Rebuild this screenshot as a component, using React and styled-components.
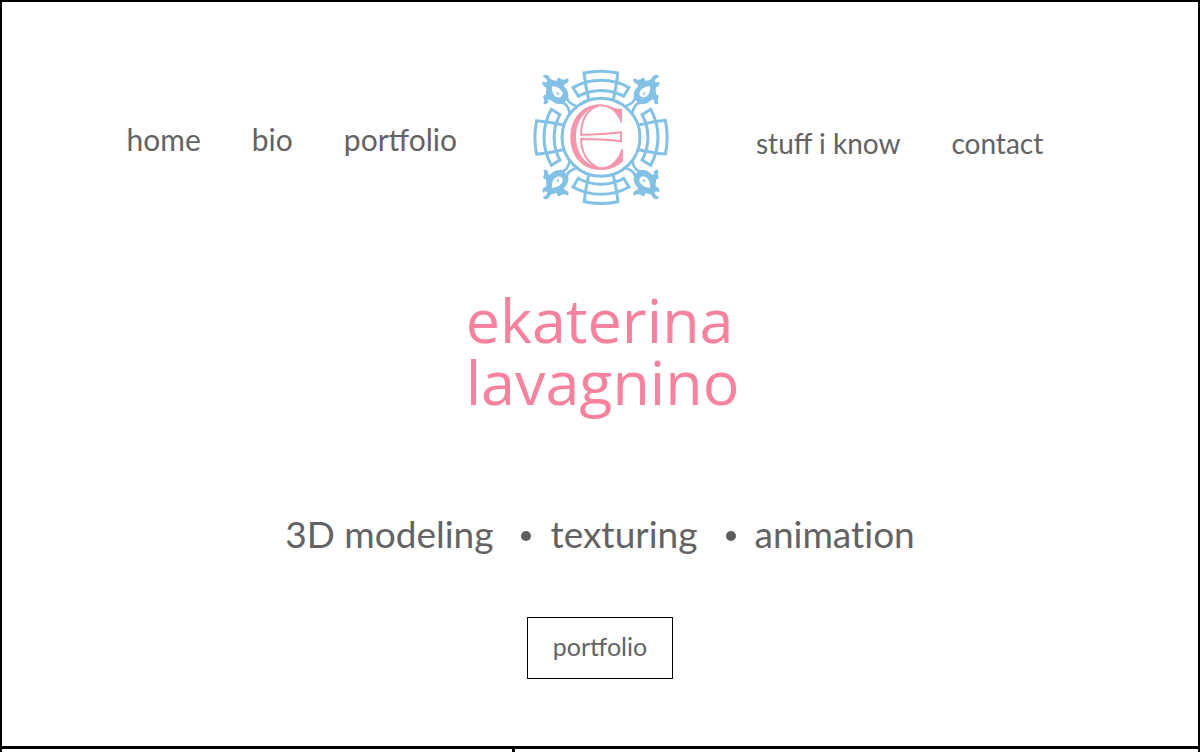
import React from "react";
import styled, { createGlobalStyle } from "styled-components";

const Global = createGlobalStyle`
  *{box-sizing:border-box}
  body{margin:0;background:#fff;color:#636364;font-family:Lato,"Liberation Sans",sans-serif;font-weight:400}
`;
const Page = styled.div`border:2px solid #000;border-bottom:0;overflow:hidden;`;
const Hero = styled.main`display:flex;flex-direction:column;align-items:center;padding:60px 0 67px;border-bottom:3px solid #000;`;
const Header = styled.header`align-self:stretch;display:grid;grid-template-columns:1fr 150px 1fr;align-items:center;`;
const Nav = styled.nav`display:flex;gap:51px;justify-content:${p => p.$side === "left" ? "flex-end" : "flex-start"};
  font-size:${p => p.$side === "left" ? 30 : 28}px;
  padding:${p => p.$side === "left" ? "3px 68px 0 0" : "11px 0 0 81px"};`;
const NavLink = styled.a`color:inherit;text-decoration:none;line-height:40px;white-space:nowrap;`;
const Name = styled.h1`margin:77px 0 0 5px;font-family:"Open Sans",sans-serif;font-weight:400;font-size:61px;line-height:62px;color:#f6829d;`;
const Skills = styled.ul`list-style:none;margin:97px 0 0;padding:0;display:flex;align-items:center;font-size:37px;line-height:48px;font-variant-ligatures:none;`;
const Skill = styled.li`display:flex;align-items:center;
  & + &::before{content:"";width:10px;height:10px;border-radius:50%;background:#5e5e5f;margin:4px 19px 0 28px;}`;
const Button = styled.button`margin-top:59px;width:146px;height:62px;padding:0 0 4px;border:1px solid #000;background:#fff;color:inherit;font:inherit;font-size:25px;`;
const Tiles = styled.section`display:grid;grid-template-columns:3fr 4fr;height:48px;margin-bottom:-45px;`;
const Tile = styled.div`border-right:${p => p.$divided ? "3px solid #000" : "0"};`;

const BLUE = "#84c1e7";
const PINK = "#f597ac";
const quarters = [0, 90, 180, 270];
const corners = ["", "translate(450 0) scale(-1 1)", "translate(0 450) scale(1 -1)", "translate(450 450) scale(-1 -1)"];

const Arm = ({ turn }) => (
  <g transform={`rotate(${turn} 225 226)`} stroke={BLUE} strokeWidth="9">
    <path d="M188 112Q178 70 174 33Q225 22 275 33Q272 68 262 112" />
    <path d="M159 106L141 77A172 172 0 0 1 309 77L291 106" />
    <path d="M154 104A144 144 0 0 1 296 104" />
  </g>
);

const Leaf = ({ place }) => (
  <g transform={place}>
    <path fill={BLUE} fillRule="evenodd" d="M50 44C55 36 67 37 71 46C74 55 84 55 92 57C92 49 99 44 104 50C110 55 118 54 125 49C132 55 126 63 119 65C114 66 113 69 115 74C127 85 130 99 124 112L113 123C99 129 86 126 75 115C68 110 64 112 67 118C65 127 58 129 53 125C52 120 56 116 54 110C49 104 52 98 60 98C58 91 64 82 59 76C50 73 47 65 52 58C55 63 63 62 64 57C62 50 56 47 50 44ZM78 73C77 88 82 103 94 106C103 108 110 103 110 94C106 80 92 73 78 73Z" />
    <path d="M92 91Q97 94 98 99" stroke={BLUE} strokeWidth="4" />
    <path d="M122 100Q120 122 151 132M101 122Q124 119 131 153" stroke={BLUE} strokeWidth="8" />
  </g>
);

function Logo() {
  return (
    <svg width="150" height="150" viewBox="-3 0 450 450" fill="none" role="img" aria-label="E">
      {quarters.map(turn => <Arm key={turn} turn={turn} />)}
      {corners.map(place => <Leaf key={place} place={place} />)}
      <circle cx="225" cy="226" r="117" stroke={BLUE} strokeWidth="9" />
      <path fill={PINK} d="M288 140V182H285C270 146 247 132 219 133C178 137 150 178 150 226C150 274 180 314 225 316C252 316 274 298 286 262H291V297C272 317 249 324 222 324C170 324 133 284 133 226C133 168 171 127 222 127C250 127 269 145 288 140Z" />
      <path stroke={PINK} strokeWidth="6" d="M218 131C183 142 166 173 165 218Q230 218 285 211V238Q230 231 165 231C166 271 184 306 222 319" />
    </svg>
  );
}

export default function App() {
  return <><Global /><Page>
    <Hero>
      <Header>
        <Nav $side="left"><NavLink href="#home">home</NavLink><NavLink href="#bio">bio</NavLink><NavLink href="#portfolio">portfolio</NavLink></Nav>
        <Logo />
        <Nav $side="right"><NavLink href="#stuff">stuff i know</NavLink><NavLink href="#contact">contact</NavLink></Nav>
      </Header>
      <Name>ekaterina<br />lavagnino</Name>
      <Skills><Skill>3D modeling</Skill><Skill>texturing</Skill><Skill>animation</Skill></Skills>
      <Button type="button">portfolio</Button>
    </Hero>
    <Tiles><Tile $divided /><Tile /></Tiles>
  </Page></>;
}
